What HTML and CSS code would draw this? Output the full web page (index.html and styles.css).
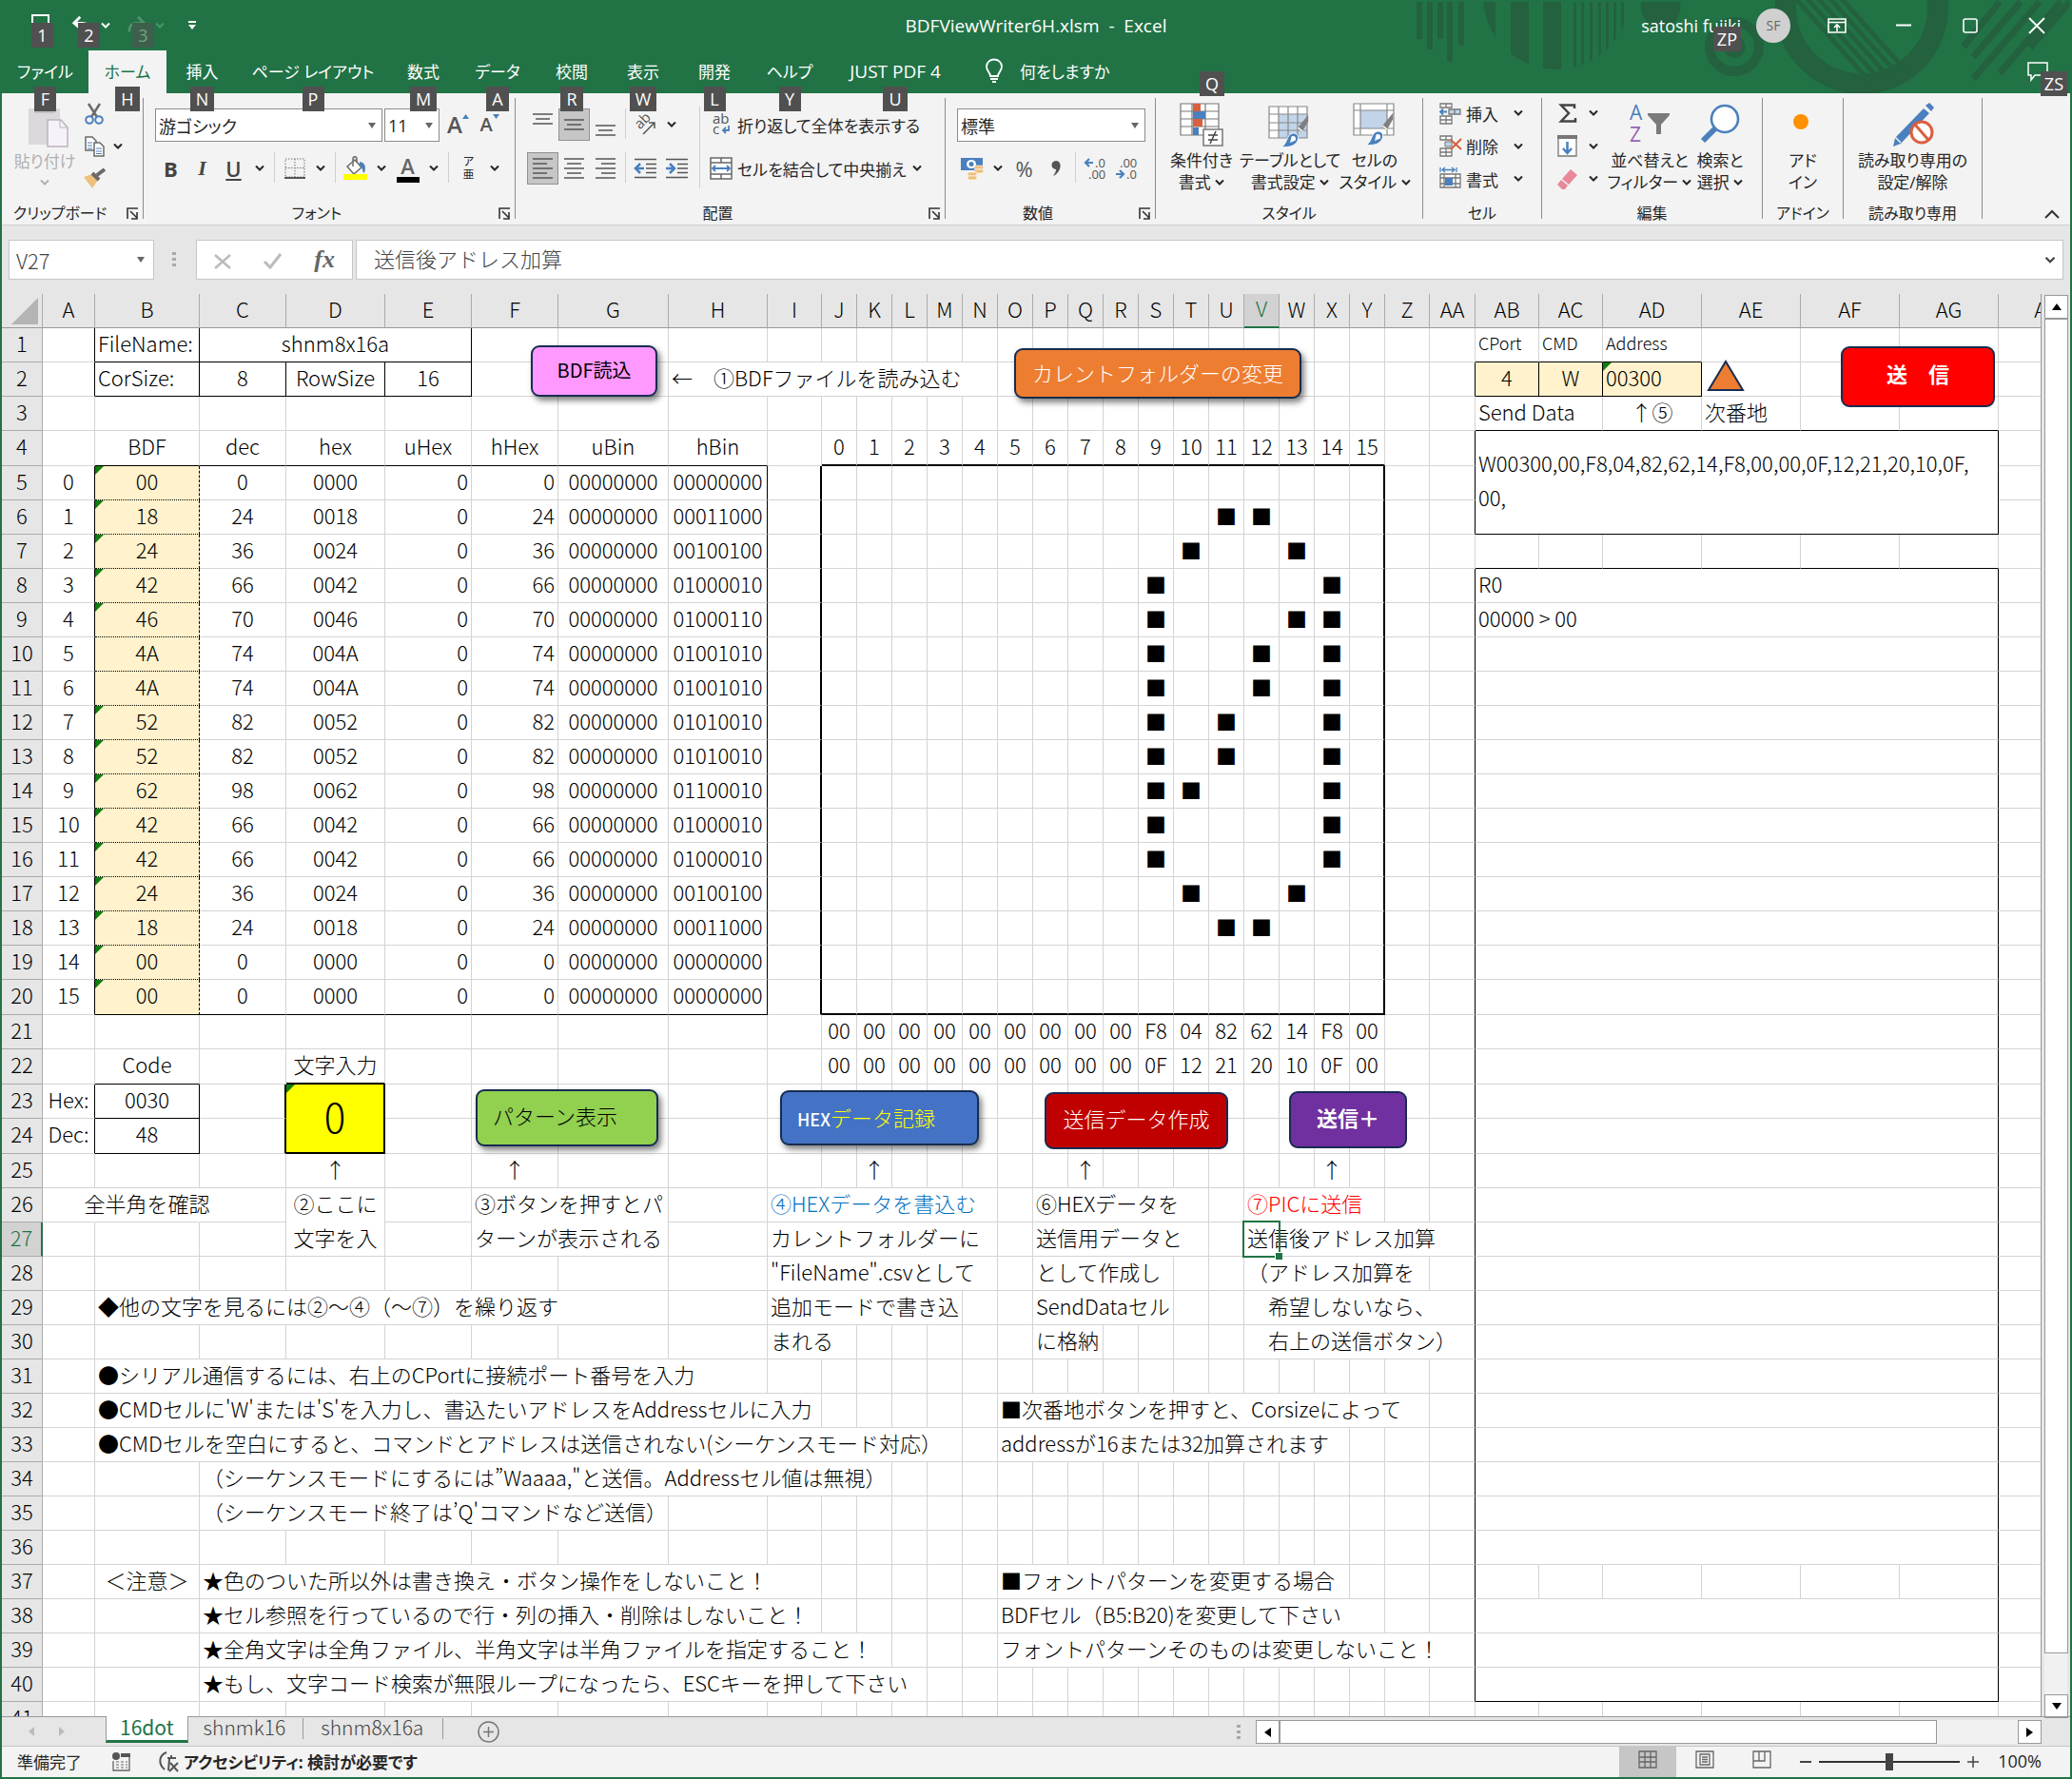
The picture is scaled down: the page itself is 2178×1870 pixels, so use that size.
FILE: index.html
```html
<!DOCTYPE html>
<html lang="ja">
<head>
    <meta charset="UTF-8">
    <title>BDFViewWriter6H.xlsm - Excel</title>
    <link rel="stylesheet" href="styles.css">
</head>
<body>

<!-- shared icon shapes -->
<svg class="defs">
    <symbol id="chev" viewBox="0 0 10 8"><path d="M1 1.5l4 4 4-4" fill="none" stroke="currentColor" stroke-width="2"/></symbol>
    <symbol id="launch" viewBox="0 0 13 13"><path d="M1 12V1h11M4 4l7 7M11 5v7H5" fill="none" stroke="#333" stroke-width="1.6"/></symbol>
    <symbol id="brush" viewBox="0 0 36 42"><path d="M35 1v8l-8 14-6-5z" fill="#7f7f7f"/><path d="M22 17l6 5" stroke="#f3f3f3" stroke-width="2"/><path d="M1 41c8-2 6-16 15-17 7 0 8 7 4 12-4 5-11 6-19 5z" fill="#4a80bd" stroke="#fff"/><path d="M14 28c4-1 6 1 5 5l-7 3z" fill="#fff"/></symbol>
</svg>

<div class="window">

<header class="titlebar">
    <svg class="deco" width="700" height="98" viewBox="1478 0 700 98">
        <defs>
            <clipPath id="bowl"><circle cx="1636" cy="-4" r="77"/></clipPath>
            <clipPath id="cup"><circle cx="1957" cy="6" r="80"/></clipPath>
        </defs>
        <g fill="#24613f">
            <path d="M1489 2h6v39h-6zM1500 2h6v50h-6zM1511 2h6v39h-6zM1521 2h6v63h-6zM1533 2h6v46h-6z"/>
            <path clip-path="url(#bowl)" d="M1558 2h14v96h-14zM1588 2h19v96h-19zM1622 2h19v96h-19zM1654 2h3v96h-3zM1662 2h3v96h-3zM1671 2h3v96h-3zM1680 2h3v96h-3zM1688 2h3v96h-3zM1696 2h3v96h-3zM1704 2h3v96h-3z"/>
            <path d="M1725 2h41c2 12-4 26-20 30-17-4-22-18-21-30z"/>
        </g>
        <g fill="none" stroke="#24613f">
            <circle cx="1823" cy="49" r="26" stroke-width="10"/>
            <circle cx="1823" cy="49" r="7" stroke-width="9"/>
            <circle cx="1957" cy="8" r="80" stroke-width="22"/>
            <path clip-path="url(#cup)" stroke-width="5" d="M1880 -10l100 112M1892 -10l100 112M1904 -10l100 112M1916 -10l100 112M1928 -10l100 112"/>
            <path stroke-width="7" d="M2064 49l38-47M2074 60l50-58M2074 83l70-81M2102 77l64-75M2134 50l42-48"/>
        </g>
    </svg>
    <div class="quick">
        <button class="q save" aria-label="上書き保存"><svg width="20" height="24" viewBox="0 0 20 24"><path d="M1 24V1h17v23" fill="none" stroke="#fff" stroke-width="2"/></svg><span class="keytip">1</span></button>
        <button class="q undo" aria-label="元に戻す"><svg width="22" height="22" viewBox="0 0 24 22"><path d="M9 1L2 8l8 7M3 8h9c6 0 8 4 8 10" fill="none" stroke="#fff" stroke-width="3"/></svg><span class="keytip">2</span><svg width="10" height="8"><use href="#chev"/></svg></button>
        <button class="q redo" aria-label="やり直し"><svg width="22" height="22" viewBox="0 0 24 22"><path d="M13 1l7 7-8 7M20 8h-9c-6 0-8 4-8 10" fill="none" stroke="#4d9467" stroke-width="3"/></svg><span class="keytip faded">3</span><svg width="10" height="8"><use href="#chev"/></svg></button>
        <button class="q" aria-label="カスタマイズ"><svg width="8" height="9" viewBox="0 0 8 9"><path d="M0 1h8" stroke="#fff" stroke-width="2"/><path d="M0 4h8l-4 5z" fill="#fff"/></svg></button>
    </div>
    <div class="title">BDFViewWriter6H.xlsm&nbsp; -&nbsp; Excel</div>
    <div class="account">
        <span class="user">satoshi fujiki<span class="keytip">ZP</span></span>
        <span class="avatar">SF</span>
        <button class="winbtn" aria-label="リボンの表示"><svg width="20" height="16" viewBox="0 0 20 16"><path d="M1 1h18v14H1zM1 4.500h18M10 14V7M7 10l3-3 3 3" fill="none" stroke="#fff" stroke-width="1.600"/></svg></button>
        <button class="winbtn" aria-label="最小化"><svg width="16" height="16" viewBox="0 0 16 16"><path d="M0 7.500h16" stroke="#fff" stroke-width="2"/></svg></button>
        <button class="winbtn" aria-label="最大化"><svg width="16" height="16" viewBox="0 0 16 16"><rect x="1" y="1" width="14" height="14" rx="2" fill="none" stroke="#fff" stroke-width="1.600"/></svg></button>
        <button class="winbtn" aria-label="閉じる"><svg width="16" height="16" viewBox="0 0 16 16"><path d="M0 0l16 16M16 0L0 16" stroke="#fff" stroke-width="1.800"/></svg></button>
    </div>
</header>

<nav class="tabs">
    <a href="#">ファイル<span class="keytip">F</span></a>
    <a href="#" class="active">ホーム<span class="keytip">H</span></a>
    <a href="#">挿入<span class="keytip">N</span></a>
    <a href="#">ページ レイアウト<span class="keytip">P</span></a>
    <a href="#">数式<span class="keytip">M</span></a>
    <a href="#">データ<span class="keytip">A</span></a>
    <a href="#">校閲<span class="keytip">R</span></a>
    <a href="#">表示<span class="keytip">W</span></a>
    <a href="#">開発<span class="keytip">L</span></a>
    <a href="#">ヘルプ<span class="keytip">Y</span></a>
    <a href="#" class="latin">JUST PDF 4<span class="keytip">U</span></a>
    <a href="#" class="tell"><svg width="18" height="25" viewBox="0 0 18 25"><path d="M5 18c0-4-4-5-4-10a8 7.500 0 0 1 16 0c0 5-4 6-4 10zM5 21h8M7 24h4" fill="none" stroke="#fff" stroke-width="1.800"/></svg>何をしますか<span class="keytip">Q</span></a>
    <a href="#" class="comment" aria-label="コメント"><svg width="22" height="20" viewBox="0 0 22 20"><path d="M1 1h20v13H8l-4 5v-5H1z" fill="none" stroke="#fff" stroke-width="1.500"/></svg><span class="keytip">ZS</span></a>
</nav>

<section class="ribbon">
    <div class="group clipboard">
        <div class="body">
            <button class="big off">
                <svg width="42" height="42" viewBox="0 0 42 42"><path d="M0 1h33v38H0z" fill="#dcd8dc"/><path d="M6 0h22v6H6z" fill="#c4c0c4"/><path d="M20 13h14l7 8v20H20z" fill="#f6f2f8" stroke="#bbb5bd" stroke-width="1.500"/><path d="M33 13v8h8" fill="none" stroke="#bbb5bd"/></svg>
                <span>貼り付け</span><svg width="10" height="8"><use href="#chev"/></svg>
            </button>
            <div class="stack">
                <button class="ib" aria-label="切り取り"><svg width="20" height="23" viewBox="0 0 20 23"><path d="M4 1l9 14M16 1L7 15" stroke="#6a6a6a" stroke-width="2.500"/><g fill="none" stroke="#4a80bd" stroke-width="2"><circle cx="5" cy="18" r="3.800"/><circle cx="15" cy="18" r="3.800"/></g></svg></button>
                <span class="pair"><button class="ib" aria-label="コピー"><svg width="21" height="22" viewBox="0 0 21 22"><g fill="#fff" stroke="#6a6a6a" stroke-width="1.500"><path d="M1 1h7l4 4v10H1z"/><path d="M10 7h6l4 4v10H10z"/></g><path d="M3 7h5M3 10h5M3 13h5M12 13h6M12 16h6M12 18.500h6" stroke="#4a80bd"/></svg></button><button class="dd"><svg width="10" height="8"><use href="#chev"/></svg></button></span>
                <button class="ib" aria-label="書式のコピー"><svg width="23" height="21" viewBox="0 0 23 21"><path d="M0 9l9-3 6 6-6 9z" fill="#eec07c"/><path d="M9 5l7 7M14 7l8-6" stroke="#6a6a6a" stroke-width="4"/></svg></button>
            </div>
        </div>
        <div class="caption opens">クリップボード<svg class="launch"><use href="#launch"/></svg></div>
    </div>

    <div class="group font">
        <div class="body rows">
            <div class="line">
                <label class="combo wide"><input type="text" value="游ゴシック" aria-label="フォント"><i></i></label>
                <label class="combo small"><input type="text" value="11" aria-label="フォント サイズ"><i></i></label>
                <button class="ib glyph"><b class="up">A</b><svg width="7" height="5"><path d="M0 5l3.500-5L7 5z" fill="#4a80bd"/></svg></button>
                <button class="ib glyph"><b class="down">A</b><svg width="7" height="5"><path d="M0 0h7L3.500 5z" fill="#4a80bd"/></svg></button>
            </div>
            <div class="line">
                <button class="ib fmt"><b>B</b></button>
                <button class="ib fmt"><i>I</i></button>
                <button class="ib fmt"><u>U</u></button>
                <button class="dd"><svg width="10" height="8"><use href="#chev"/></svg></button>
                <hr>
                <button class="ib" aria-label="罫線"><svg width="22" height="22" viewBox="0 0 22 22"><path d="M1 1h20v19H1zM11 1v19M1 10.500h20" fill="none" stroke="#777" stroke-dasharray="1.500 1.500"/><path d="M0 21h22" stroke="#555" stroke-width="2"/></svg></button>
                <button class="dd"><svg width="10" height="8"><use href="#chev"/></svg></button>
                <hr>
                <button class="ib" aria-label="塗りつぶし"><svg width="25" height="26" viewBox="0 0 25 26"><path d="M4 11l8-7 7 8-8 7z" fill="#fff" stroke="#6a6a6a" stroke-width="1.500"/><path d="M10 11V3c0-3 4-3 4 0v4" fill="none" stroke="#6a6a6a" stroke-width="1.500"/><path d="M17 6c6 1 7 5 5 12-3-2-1-6-5-9z" fill="#4a80bd"/><path d="M0 19h25v6H0z" fill="#ff0"/></svg></button>
                <button class="dd"><svg width="10" height="8"><use href="#chev"/></svg></button>
                <button class="ib colour" aria-label="フォントの色"><b>A</b></button>
                <button class="dd"><svg width="10" height="8"><use href="#chev"/></svg></button>
                <hr>
                <button class="ib ruby"><span>ア</span><span class="kanji">亜</span></button>
                <button class="dd"><svg width="10" height="8"><use href="#chev"/></svg></button>
            </div>
        </div>
        <div class="caption opens">フォント<svg class="launch"><use href="#launch"/></svg></div>
    </div>

    <div class="group align">
        <div class="body">
            <div class="rows">
                <div class="line">
                    <button class="ib" aria-label="上揃え"><svg width="21" height="24" viewBox="0 0 21 24"><path d="M0 1h21M3 6h15M0 11h21" stroke="#555" stroke-width="1.500"/></svg></button>
                    <button class="ib on" aria-label="上下中央揃え"><svg width="21" height="24" viewBox="0 0 21 24"><path d="M0 7h21M3 12h15M0 17h21" stroke="#555" stroke-width="1.500"/></svg></button>
                    <button class="ib" aria-label="下揃え"><svg width="21" height="24" viewBox="0 0 21 24"><path d="M0 13h21M3 18h15M0 23h21" stroke="#555" stroke-width="1.500"/></svg></button>
                    <hr>
                    <button class="ib" aria-label="方向"><svg width="26" height="24" viewBox="0 0 26 24"><text x="4" y="17" transform="rotate(-45 6 14)" font-size="15" fill="#555">ab</text><path d="M10 22L22 10M16 10h6v6" fill="none" stroke="#555" stroke-width="1.500"/></svg></button>
                    <button class="dd"><svg width="10" height="8"><use href="#chev"/></svg></button>
                </div>
                <div class="line">
                    <button class="ib on" aria-label="左揃え"><svg width="21" height="24" viewBox="0 0 21 24"><path d="M0 2h21M0 7h15M0 12h21M0 17h15M0 22h21" stroke="#555" stroke-width="1.500"/></svg></button>
                    <button class="ib" aria-label="中央揃え"><svg width="21" height="24" viewBox="0 0 21 24"><path d="M0 2h21M3 7h15M0 12h21M3 17h15M0 22h21" stroke="#555" stroke-width="1.500"/></svg></button>
                    <button class="ib" aria-label="右揃え"><svg width="21" height="24" viewBox="0 0 21 24"><path d="M0 2h21M6 7h15M0 12h21M6 17h15M0 22h21" stroke="#555" stroke-width="1.500"/></svg></button>
                    <hr>
                    <button class="ib" aria-label="インデントを減らす"><svg width="23" height="22" viewBox="0 0 23 22"><path d="M0 1.500h23M12 6.500h11M12 11h11M12 15.500h11M0 20.500h23" stroke="#555" stroke-width="1.500"/><path d="M10 11H2M6 6l-5 5 5 5" fill="none" stroke="#4a80bd" stroke-width="2.500"/></svg></button>
                    <button class="ib" aria-label="インデントを増やす"><svg width="23" height="22" viewBox="0 0 23 22"><path d="M0 1.500h23M12 6.500h11M12 11h11M12 15.500h11M0 20.500h23" stroke="#555" stroke-width="1.500"/><path d="M0 11h8M4 6l5 5-5 5" fill="none" stroke="#4a80bd" stroke-width="2.500"/></svg></button>
                </div>
            </div>
            <hr class="tall">
            <div class="rows">
                <div class="line"><button class="txt"><svg width="24" height="26" viewBox="0 0 24 26"><text x="3" y="12" font-size="15" fill="#555">ab</text><text x="3" y="23" font-size="15" fill="#555">c</text><path d="M20 14v5h-6M17 16l-3 3 3 3" fill="none" stroke="#4a80bd" stroke-width="1.800"/></svg>折り返して全体を表示する</button></div>
                <div class="line"><button class="txt"><svg width="24" height="24" viewBox="0 0 24 24"><path d="M1 1h22v22H1zM1 6h22M1 18h22M12 1v5M12 18v5" fill="#fff" stroke="#666" stroke-width="1.500"/><path d="M3 12h18M6 9l-3 3 3 3M18 9l3 3-3 3" fill="none" stroke="#4a80bd" stroke-width="1.800"/></svg>セルを結合して中央揃え</button><button class="dd"><svg width="10" height="8"><use href="#chev"/></svg></button></div>
            </div>
        </div>
        <div class="caption opens">配置<svg class="launch"><use href="#launch"/></svg></div>
    </div>

    <div class="group number">
        <div class="body rows">
            <div class="line"><label class="combo format"><input type="text" value="標準" aria-label="表示形式"><i></i></label></div>
            <div class="line">
                <button class="ib" aria-label="通貨"><svg width="24" height="24" viewBox="0 0 24 24"><path d="M0 1h23v13H0z" fill="#4a80bd"/><ellipse cx="11" cy="7.500" rx="5" ry="4.500" fill="#fff"/><circle cx="11" cy="7.500" r="2.500" fill="#4a80bd"/><g fill="#eec07c" stroke="#fff" stroke-width=".6"><rect x="14" y="9" width="10" height="4" rx="2"/><rect x="14" y="13" width="10" height="4" rx="2"/><rect x="7" y="16" width="10" height="4" rx="2"/><rect x="7" y="20" width="10" height="4" rx="2"/></g></svg></button>
                <button class="dd"><svg width="10" height="8"><use href="#chev"/></svg></button>
                <button class="ib percent">%</button>
                <button class="ib" aria-label="桁区切り"><svg width="10" height="16" viewBox="0 0 10 16"><path d="M5 0c7 0 6 12-3 16 3-4 3-6 3-7-6 0-6-9 0-9z" fill="#555"/></svg></button>
                <hr>
                <button class="ib" aria-label="小数点以下を増やす"><svg width="26" height="26" viewBox="0 0 26 26"><path d="M10 7H2M6 3L2 7l4 4" fill="none" stroke="#4a80bd" stroke-width="2.200"/><text x="12" y="12" font-size="13" fill="#555">.0</text><text x="5" y="24" font-size="13" fill="#555">.00</text></svg></button>
                <button class="ib" aria-label="小数点以下を減らす"><svg width="26" height="26" viewBox="0 0 26 26"><path d="M1 19h8M5 15l4 4-4 4" fill="none" stroke="#4a80bd" stroke-width="2.200"/><text x="5" y="12" font-size="13" fill="#555">.00</text><text x="12" y="24" font-size="13" fill="#555">.0</text></svg></button>
            </div>
        </div>
        <div class="caption opens">数値<svg class="launch"><use href="#launch"/></svg></div>
    </div>

    <div class="group style">
        <div class="body">
            <button class="big">
                <svg width="46" height="46" viewBox="0 0 46 46"><path d="M1 1h40v33H1zM13 1v33M27 1v33M1 9h40M1 17h40M1 25h40" fill="#fff" stroke="#777" stroke-width="1.200"/><path d="M14 1h8v8h-8zM14 17h10v8H14z" fill="#d95f3f"/><path d="M14 9h13v8H14zM14 26h6v8h-6z" fill="#4a80bd"/><path d="M25 28h20v17H25z" fill="#fff" stroke="#777" stroke-width="1.500"/><path d="M30 34h10M30 39h10M38 30l-6 13" stroke="#444" stroke-width="1.500"/></svg>
                <span>条件付き</span><span>書式 <svg width="10" height="8"><use href="#chev"/></svg></span>
            </button>
            <button class="big">
                <svg width="46" height="46" viewBox="0 0 46 46"><path d="M1 4h40v33H1z" fill="#fff"/><path d="M11 12h30v25H11z" fill="#c1d4ea"/><path d="M1 4h40v33H1zM11 4v33M21 4v33M31 4v33M1 12h40M1 21h40M1 29h40" fill="none" stroke="#888" stroke-width="1.200"/><use href="#brush" x="11" y="12" width="34" height="35"/></svg>
                <span>テーブルとして</span><span>書式設定 <svg width="10" height="8"><use href="#chev"/></svg></span>
            </button>
            <button class="big">
                <svg width="46" height="46" viewBox="0 0 46 46"><path d="M1 1h42v33H1z" fill="#fff"/><path d="M8 8h28v19H8z" fill="#c1d4ea"/><path d="M1 1h42v33H1zM8 1v33M36 1v33M1 8h42M1 27h42" fill="none" stroke="#888" stroke-width="1.200"/><use href="#brush" x="11" y="10" width="34" height="35"/></svg>
                <span>セルの</span><span>スタイル <svg width="10" height="8"><use href="#chev"/></svg></span>
            </button>
        </div>
        <div class="caption">スタイル</div>
    </div>

    <div class="group cells">
        <div class="body rows3">
            <button class="txt"><svg width="23" height="23" viewBox="0 0 23 23"><path d="M1 1h12v4H1zM7 1v4M1 14h12v8H1zM7 14v8M1 18h12" fill="#fff" stroke="#777" stroke-width="1.300"/><path d="M10 7h12v5H10zM16 7v5" fill="#c1d4ea" stroke="#777" stroke-width="1.300"/><path d="M8 9.500H1M4 6.500l-3 3 3 3" fill="none" stroke="#4a80bd" stroke-width="1.800"/></svg>挿入<svg class="c" width="10" height="8"><use href="#chev"/></svg></button>
            <button class="txt"><svg width="23" height="23" viewBox="0 0 23 23"><path d="M1 1h12v4H1zM7 1v4M1 14h12v8H1zM7 14v8M1 18h12" fill="#fff" stroke="#777" stroke-width="1.300"/><path d="M6 7h7v5H6z" fill="#c1d4ea" stroke="#777"/><path d="M12 5l11 10M23 4L12 15" stroke="#d95f3f" stroke-width="2.200"/></svg>削除<svg class="c" width="10" height="8"><use href="#chev"/></svg></button>
            <button class="txt"><svg width="23" height="25" viewBox="0 0 23 25"><path d="M1 7h21v14H1zM5 7v14M17 7v14M1 11h21M1 17h21" fill="#fff" stroke="#777" stroke-width="1.300"/><path d="M6 11h8v8H6z" fill="#4a80bd"/><path d="M1 0v5M18 0v5M3 2.500h13M6 0L3 2.500 6 5M13 0l3 2.500L13 5" fill="none" stroke="#4a80bd" stroke-width="1.300"/></svg>書式<svg class="c" width="10" height="8"><use href="#chev"/></svg></button>
        </div>
        <div class="caption">セル</div>
    </div>

    <div class="group edit">
        <div class="body">
            <div class="rows3">
                <span class="pair"><button class="ib" aria-label="合計"><svg width="18" height="20" viewBox="0 0 18 20"><path d="M16 5V1.500H2L10 10l-8 8.500h15V15" fill="none" stroke="#444" stroke-width="2.500"/></svg></button><button class="dd"><svg width="10" height="8"><use href="#chev"/></svg></button></span>
                <span class="pair"><button class="ib" aria-label="フィル"><svg width="21" height="23" viewBox="0 0 21 23"><path d="M1 1h19v21H1z" fill="#fff" stroke="#777" stroke-width="1.300"/><path d="M0 0h21v4H0z" fill="#777"/><path d="M10.500 7v12M6 14l4.500 5 4.500-5" fill="none" stroke="#4a80bd" stroke-width="2.500"/></svg></button><button class="dd"><svg width="10" height="8"><use href="#chev"/></svg></button></span>
                <span class="pair"><button class="ib" aria-label="クリア"><svg width="21" height="21" viewBox="0 0 21 21"><path d="M5 10L14 0l7 6-9 10z" fill="#e8889a"/><path d="M4 11l7 6-3 4-3 0-5-5z" fill="#e8889a"/></svg></button><button class="dd"><svg width="10" height="8"><use href="#chev"/></svg></button></span>
            </div>
            <button class="big">
                <svg width="42" height="46" viewBox="0 0 42 46"><text x="0" y="18" font-size="21" fill="#4a80bd">A</text><text x="0" y="41" font-size="21" fill="#9a62b8">Z</text><path d="M19 11h23v2l-9 10v10h-5V23l-9-10z" fill="#7a7a7a"/></svg>
                <span>並べ替えと</span><span>フィルター <svg width="10" height="8"><use href="#chev"/></svg></span>
            </button>
            <button class="big">
                <svg width="42" height="46" viewBox="0 0 42 46"><circle cx="26" cy="17" r="14" fill="#fff" stroke="#4a80bd" stroke-width="2.600"/><path d="M16 27L3 40" stroke="#4a80bd" stroke-width="6"/></svg>
                <span>検索と</span><span>選択 <svg width="10" height="8"><use href="#chev"/></svg></span>
            </button>
        </div>
        <div class="caption">編集</div>
    </div>

    <div class="group addin">
        <div class="body">
            <button class="big"><svg width="42" height="46" viewBox="0 0 42 46"><circle cx="19" cy="20" r="8" fill="#ff9000"/></svg><span>アド</span><span>イン</span></button>
        </div>
        <div class="caption">アドイン</div>
    </div>

    <div class="group readonly">
        <div class="body">
            <button class="big"><svg width="48" height="46" viewBox="0 0 48 46"><path d="M35 6l6 5-30 32-8 3 2-9z" fill="#4a80bd"/><path d="M37 3l4-3 5 5-3 4z" fill="#4a80bd"/><path d="M5 36l6 6" stroke="#f3f3f3" stroke-width="1.500"/><circle cx="33" cy="31" r="11" fill="#fff" stroke="#d95f3f" stroke-width="3"/><path d="M26 23l14 16" stroke="#d95f3f" stroke-width="3"/></svg><span>読み取り専用の</span><span>設定/解除</span></button>
        </div>
        <div class="caption">読み取り専用</div>
    </div>
    <button class="collapse" aria-label="リボンを折りたたむ"><svg width="16" height="10" viewBox="0 0 16 10"><path d="M1 9l7-7 7 7" fill="none" stroke="#333" stroke-width="2"/></svg></button>
</section>

<section class="formulabar">
    <label class="namebox"><input type="text" value="V27" aria-label="名前ボックス"><i></i></label>
    <span class="dots"></span>
    <div class="fx">
        <button aria-label="キャンセル"><svg width="18" height="16" viewBox="0 0 18 16"><path d="M1 1l16 14M17 1L1 15" stroke="#bbb" stroke-width="2.500"/></svg></button>
        <button aria-label="入力"><svg width="19" height="17" viewBox="0 0 19 17"><path d="M1 9l6 6L18 1" fill="none" stroke="#bbb" stroke-width="3"/></svg></button>
        <button class="fn"><i>fx</i></button>
    </div>
    <div class="formula"><input type="text" value="送信後アドレス加算" aria-label="数式バー"><svg width="12" height="9"><use href="#chev"/></svg></div>
</section>

<main class="work">
    <div class="sheet">
        <table id="grid"></table>
        <button class="shape s-bdf shadow">BDF読込</button>
        <button class="shape s-folder shadow">カレントフォルダーの変更</button>
        <button class="shape s-send">送　信</button>
        <button class="tri" aria-label="次番地"><svg width="42" height="36" viewBox="0 0 42 36"><path d="M21 3l18 30H3z" fill="#ed7d31" stroke="#172c51" stroke-width="2"/></svg></button>
        <button class="shape s-pattern shadow">パターン表示</button>
        <button class="shape s-hex shadow"><span>HEX</span>データ記録</button>
        <button class="shape s-make">送信データ作成</button>
        <button class="shape s-plus">送信＋</button>
        <div class="cursor"></div>
    </div>
    <div class="vscroll">
        <button class="arrow" aria-label="上へ"><svg width="10" height="7"><path d="M0 7l5-7 5 7z"/></svg></button>
        <div class="vtrack"><div class="vthumb"></div></div>
        <button class="arrow" aria-label="下へ"><svg width="10" height="7"><path d="M0 0h10L5 7z"/></svg></button>
    </div>
</main>

<div class="sheetbar">
    <div class="navs"><svg width="6" height="10"><path d="M6 0v10L0 5z"/></svg><svg width="6" height="10"><path d="M0 0v10l6-5z"/></svg></div>
    <a href="#" class="current">16dot</a>
    <a href="#">shnmk16</a>
    <a href="#">shnm8x16a</a>
    <button class="plus" aria-label="新しいシート"><svg width="23" height="23" viewBox="0 0 23 23"><circle cx="11.500" cy="11.500" r="10.500" fill="none" stroke="#777" stroke-width="1.500"/><path d="M11.500 6v11M6 11.500h11" stroke="#777" stroke-width="1.500"/></svg></button>
    <span class="dots"></span>
    <div class="hscroll">
        <button class="arrow" aria-label="左へ"><svg width="7" height="10"><path d="M7 0v10L0 5z"/></svg></button>
        <div class="htrack"><div class="hthumb"></div></div>
        <button class="arrow" aria-label="右へ"><svg width="7" height="10"><path d="M0 0v10l7-5z"/></svg></button>
    </div>
</div>

<footer class="status">
    <span>準備完了</span>
    <svg class="rec" width="20" height="20" viewBox="0 0 20 20"><circle cx="5" cy="4" r="4" fill="#555"/><path d="M10 1h10v4H10z" fill="#555"/><path d="M2 9v10h17V5" fill="none" stroke="#666" stroke-width="1.300"/><path d="M5 10h3M10 10h3M15 10h2M5 13h3M10 13h3M15 13h2M5 16h3M10 16h3M15 16h2" stroke="#666"/></svg>
    <svg class="acc" width="22" height="22" viewBox="0 0 22 22"><path d="M8 1C0 4-1 13 6 19M9 7h9M13 4v4M11 8l-1 12M12 12l8 9M20 12l-9 9" fill="none" stroke="#555" stroke-width="2"/></svg>
    <b>アクセシビリティ: 検討が必要です</b>
    <div class="views">
        <button class="on" aria-label="標準"><svg width="20" height="19" viewBox="0 0 20 19"><path d="M1 1h18v17H1zM7 1v17M13 1v17M1 7h18M1 12h18" fill="none" stroke="#666" stroke-width="1.300"/></svg></button>
        <button aria-label="ページ レイアウト"><svg width="20" height="19" viewBox="0 0 20 19"><path d="M1 1h18v17H1zM5 4h10v11H5zM7 7h6M7 9.500h6M7 12h6" fill="none" stroke="#666" stroke-width="1.300"/></svg></button>
        <button aria-label="改ページ"><svg width="20" height="19" viewBox="0 0 20 19"><path d="M1 1h18v17H1zM1 11h12V1M7 1v10" fill="none" stroke="#666" stroke-width="1.300"/></svg></button>
    </div>
    <svg width="12" height="12"><path d="M0 6h12" stroke="#444" stroke-width="2"/></svg>
    <input type="range" min="0" max="100" value="50" aria-label="ズーム">
    <svg width="12" height="12"><path d="M0 6h12M6 0v12" stroke="#444" stroke-width="1.500"/></svg>
    <span class="zoom">100%</span>
</footer>

</div>

<script src="script.js"></script>
</body>
</html>
```

FILE: styles.css
```css
* {
    box-sizing: border-box;
}
body {
    margin: 0;
    font-family: "Open Sans", "Noto Sans CJK JP", sans-serif;
    font-size: 17px;
    color: #262626;
}
button {
    font: inherit;
    color: inherit;
    background: none;
    border: 0;
    padding: 0;
    margin: 0;
}
input {
    font: inherit;
    color: inherit;
    border: 0;
    padding: 0;
    background: none;
    min-width: 0;
}
a {
    color: inherit;
    text-decoration: none;
}
svg {
    flex: none;
    overflow: visible;
}
.defs {
    position: absolute;
    width: 0;
    height: 0;
    overflow: hidden;
}
.window {
    height: 100vh;
    display: flex;
    flex-direction: column;
    border: solid #217346;
    border-width: 0 2px 2px;
    background: #e6e6e6;
    overflow: hidden;
    font-feature-settings: "palt";
}

/* title bar */
.titlebar {
    height: 53px;
    flex: none;
    background: #217346;
    color: #fff;
    position: relative;
    display: grid;
    grid-template-columns: 1fr auto 1fr;
    align-items: center;
}
.deco {
    position: absolute;
    right: -2px;
    top: 0;
    z-index: 3;
    overflow: hidden;
    pointer-events: none;
}
.keytip {
    position: absolute;
    min-width: 23px;
    height: 26px;
    padding: 0 6px;
    background: #505050;
    color: #fff;
    font-size: 18px;
    line-height: 26px;
    text-align: center;
    z-index: 3;
}
.quick {
    display: flex;
    padding-left: 31px;
}
.q {
    position: relative;
    display: flex;
    align-items: center;
    gap: 8px;
    height: 24px;
    margin-right: 17px;
}
.save {
    margin-right: 23px;
}
.q .keytip {
    left: 6px;
    top: 9px;
}
.save .keytip {
    left: 0;
}
.redo {
    color: #4d9467;
    margin-right: 25px;
}
.keytip.faded {
    background: #3d5f4b;
    color: #6fa384;
}
.title {
    font-size: 19px;
}
.account {
    display: flex;
    align-items: center;
    justify-content: flex-end;
    position: relative;
    z-index: 4;
}
.user {
    position: relative;
    font-size: 18px;
    margin-right: 16px;
}
.user .keytip {
    right: 0;
    top: 13px;
    padding: 0 4px;
}
.avatar {
    width: 36px;
    height: 36px;
    border-radius: 50%;
    background: #d0d0d0;
    color: #666;
    font-size: 14px;
    line-height: 36px;
    text-align: center;
    margin-right: 14px;
}
.winbtn {
    width: 70px;
    height: 24px;
    display: flex;
    align-items: center;
    justify-content: center;
}

/* ribbon tabs */
.tabs {
    height: 45px;
    flex: none;
    background: #217346;
    color: #fff;
    display: grid;
    grid-template-columns: 91px 82px 75px 158px 74px 82px 74px 76px 74px 84px 138px 1fr 60px;
    position: relative;
    z-index: 2;
}
.tabs > a {
    position: relative;
    display: flex;
    align-items: center;
    justify-content: center;
    padding-bottom: 2px;
}
.tabs > .comment {
    z-index: 4;
}
.tabs .latin {
    font-size: 19px;
}
.tabs .keytip {
    top: 38px;
}
.tabs .active {
    background: #f3f3f3;
    color: #217346;
}
.tabs .tell {
    justify-content: flex-start;
    padding-left: 26px;
    gap: 18px;
}
.tell .keytip {
    left: 251px;
}
.tabs .tell .keytip, .tabs .comment .keytip {
    top: 22px;
}
.comment svg {
    margin-right: 8px;
}
.comment .keytip {
    right: 3px;
    padding: 0 4px;
}

/* ribbon */
.ribbon {
    height: 139px;
    flex: none;
    display: flex;
    position: relative;
    background: #f3f3f3;
    border-bottom: 1px solid #d0d0d0;
    padding-top: 5px;
}
.group {
    height: 127px;
    flex: none;
    border-right: 1px solid #8c8c8c;
    display: flex;
    flex-direction: column;
}
.clipboard { width: 149px; }
.font { width: 391px; }
.align { width: 452px; }
.number { width: 221px; }
.style { width: 281px; }
.cells { width: 125px; }
.edit { width: 232px; }
.addin { width: 85px; }
.readonly { width: 146px; }
.body {
    height: 105px;
    display: flex;
}
.caption {
    position: relative;
    line-height: 32px;
    height: 22px;
    font-size: 16px;
    text-align: center;
}
.opens {
    padding-right: 26px;
}
.launch {
    position: absolute;
    right: 4px;
    bottom: -1px;
    width: 13px;
    height: 13px;
}
.big {
    display: flex;
    flex-direction: column;
    align-items: center;
    line-height: 23px;
    padding-top: 5px;
    white-space: nowrap;
}
.big span svg {
    vertical-align: 2px;
}
.big > svg:first-child {
    margin-bottom: 3px;
}
.off {
    color: #b0b0b0;
    width: 80px;
    padding-top: 10px;
    margin-left: 5px;
}
.off > svg:first-child {
    margin: 0 0 3px 8px;
}
.off > svg:last-child {
    margin-top: 7px;
}
.stack {
    display: flex;
    flex-direction: column;
    align-items: flex-start;
    justify-content: space-between;
    padding: 0 0 4px;
}
.pair {
    display: flex;
}
.ib {
    width: 33px;
    height: 34px;
    display: flex;
    align-items: center;
    justify-content: center;
}
.stack .ib {
    width: 28px;
    margin-left: -2px;
}
.on {
    background: #c6c6c6;
    border: 1px solid #919191;
}
.dd {
    width: 22px;
    display: flex;
    align-items: center;
    justify-content: center;
}
.rows {
    display: flex;
    flex-direction: column;
    gap: 12px;
    padding-top: 11px;
}
.line {
    display: flex;
    height: 34px;
}
.line hr {
    width: 1px;
    height: 32px;
    border: 0;
    margin: 0 4px;
    background: #cfcfcf;
}
hr.tall {
    width: 1px;
    height: 86px;
    border: 0;
    margin: 9px 10px 0 7px;
    background: #cfcfcf;
}
.font .body {
    padding-left: 12px;
}
.combo {
    display: flex;
    align-items: center;
    height: 35px;
    background: #fff;
    border: 1px solid #8c8c8c;
    padding: 0 6px 0 3px;
    font-size: 18px;
}
.combo input, .namebox input, .formula input {
    flex: 1;
    font-feature-settings: "palt";
}
.combo i, .namebox i {
    border: 4px solid transparent;
    border-top: 6px solid #666;
    border-bottom: 0;
}
.wide {
    width: 239px;
    margin-right: 2px;
}
.small {
    width: 58px;
    margin-right: 3px;
}
.format {
    width: 198px;
}
.glyph {
    color: #555;
    align-items: flex-start;
}
.glyph b {
    font-weight: 600;
    line-height: 34px;
}
.glyph .up {
    font-size: 24px;
}
.glyph .down {
    font-size: 20px;
}
.glyph svg {
    margin-top: 6px;
}
.fmt {
    font-size: 22px;
    color: #444;
}
.fmt i {
    font-family: "Liberation Serif", serif;
    font-weight: bold;
}
.fmt u {
    font-weight: 600;
}
.colour b {
    width: 24px;
    height: 30px;
    line-height: 24px;
    font-size: 22px;
    font-weight: 600;
    color: #666;
    border-bottom: 6px solid #000;
}
.ruby {
    flex-direction: column;
    font-size: 12px;
    line-height: 14px;
}
.align .body {
    padding-left: 12px;
}
.txt {
    display: flex;
    align-items: center;
    gap: 5px;
    white-space: nowrap;
}
.number .body {
    padding-left: 12px;
}
.number .line + .line {
    margin-left: -1px;
}
.percent {
    font-size: 22px;
    color: #555;
}
.style .body {
    display: grid;
    grid-template-columns: 96px 90px 88px;
}
.rows3 {
    display: flex;
    flex-direction: column;
    justify-content: space-between;
    padding: 0 0 4px;
}
.rows3 .txt {
    height: 32px;
    margin-left: 17px;
}
.rows3 .c {
    margin-left: 11px;
}
.rows3 .pair {
    height: 32px;
    margin-left: 10px;
}
.rows3 .ib {
    height: 32px;
}
.edit .big {
    width: 84px;
    margin-left: 6px;
}
.edit .big + .big {
    width: 64px;
    margin-left: 0;
}
.addin .big, .readonly .big {
    width: 100%;
}
.collapse {
    position: absolute;
    right: 11px;
    bottom: 1px;
}

/* formula bar */
.formulabar {
    height: 72px;
    flex: none;
    display: flex;
    align-items: center;
    padding: 0 7px;
    color: #444;
    font-size: 22px;
    font-family: "Noto Sans CJK JP", sans-serif;
    font-weight: 300;
}
.namebox, .fx, .formula {
    height: 42px;
    background: #fff;
    border: 1px solid #c6c6c6;
    display: flex;
    align-items: center;
}
.namebox {
    width: 153px;
    padding: 0 9px 0 7px;
}
.dots {
    width: 4px;
    height: 16px;
    background: repeating-linear-gradient(#a8a8a8 0 3px, transparent 3px 6px);
}
.formulabar .dots {
    margin: 0 21px 0 19px;
}
.fx {
    width: 165px;
    justify-content: space-between;
    padding: 0 18px;
    margin-right: 3px;
}
.fn {
    font: bold 26px "Liberation Serif", serif;
    color: #666;
}
.formula {
    flex: 1;
    padding: 0 7px 0 18px;
}
.formula input {
    font-feature-settings: normal;
    padding-bottom: 5px;
}

/* sheet */
.work {
    flex: 1;
    min-height: 0;
    display: flex;
}
.sheet {
    flex: 1;
    min-width: 0;
    position: relative;
    overflow: hidden;
    background: #fff;
    border-right: 1px solid #999;
    font-family: "Noto Sans CJK JP", sans-serif;
    font-feature-settings: normal;
    font-size: 22px;
    font-weight: 300;
    color: #000;
}
table {
    table-layout: fixed;
    width: 0;
    border-collapse: separate;
    border-spacing: 0;
}
th, td {
    height: 36px;
    padding: 0 0 6px;
    line-height: 28px;
    border: solid #d4d4d4;
    border-width: 0 1px 1px 0;
    white-space: nowrap;
    overflow: hidden;
    position: relative;
}
th {
    background: #e6e6e6;
    border-color: #ababab;
    font-weight: 300;
    text-align: center;
}
thead th {
    border-bottom-color: #999;
}
th.sel {
    background: #d2d2d2;
    color: #217346;
}
thead th.sel {
    border-bottom: 2px solid #217346;
}
tbody th.sel {
    border-right: 2px solid #217346;
}
.corner::after {
    content: "";
    position: absolute;
    right: 4px;
    bottom: 3px;
    border: solid transparent;
    border-width: 0 0 28px 28px;
    border-bottom-color: #b4b4b4;
}
td {
    padding: 0 3px 6px;
}
tr.tall td, tr.tall th {
    height: 37px;
}
.c { text-align: center; }
td.c { padding: 0 0 6px; }
.r { text-align: right; }
.small-text { font-size: 18px; }
.kr { border-right-color: #000; }
.kb { border-bottom-color: #000; }
.mr { border-right: 2px solid #000; }
.mb { border-bottom: 2px solid #000; }
.dot { border-bottom: 1px dotted #000; }
.dash { border-right: 1px dashed #000; }
.nr { border-right-color: transparent; }
.input { background: #fff2cc; }
.yellow {
    background: #ff0;
    font-size: 42px;
}
.flag::before {
    content: "";
    position: absolute;
    left: 0;
    top: 0;
    border: solid transparent;
    border-width: 9px 9px 0 0;
    border-top-color: #107c10;
}
.wrap {
    line-height: 36px;
}
.wrap span {
    display: block;
    margin-top: -6px;
}
td.two {
    padding-bottom: 0;
}
.blue { color: #0070c0; }
.red { color: #f00; }
.spill {
    overflow: visible;
}
.spill span {
    display: block;
    margin: 0 -30px;
}

/* shapes lying over the cells */
.shape {
    position: absolute;
    border: 2px solid #172c51;
    border-radius: 9px;
    padding-bottom: 3px;
    font-size: 22px;
    white-space: nowrap;
}
.shadow {
    box-shadow: 3px 4px 6px #00000080;
}
.s-bdf {
    left: 556px;
    top: 54px;
    width: 133px;
    height: 54px;
    background: #ff99ff;
    font-size: 20px;
    font-weight: 400;
}
.s-folder {
    left: 1064px;
    top: 57px;
    width: 302px;
    height: 53px;
    background: #ed7d31;
    color: #fff;
}
.s-send {
    left: 1933px;
    top: 55px;
    width: 162px;
    height: 64px;
    padding-bottom: 8px;
    background: #f00;
    color: #fff;
    font-weight: bold;
}
.tri {
    position: absolute;
    left: 1791px;
    top: 68px;
}
.s-pattern {
    left: 498px;
    top: 836px;
    width: 192px;
    height: 60px;
    padding-bottom: 6px;
    background: #92d050;
    text-align: left;
    padding-left: 16px;
}
.s-hex {
    left: 818px;
    top: 837px;
    width: 209px;
    height: 58px;
    background: #4472c4;
    color: #ff0;
    text-align: left;
    padding-left: 16px;
}
.s-hex span {
    color: #fff;
    font-size: 18px;
    font-weight: 500;
}
.s-make {
    left: 1096px;
    top: 839px;
    width: 193px;
    height: 60px;
    padding-bottom: 6px;
    background: #c00000;
    color: #fff;
}
.s-plus {
    left: 1353px;
    top: 838px;
    width: 124px;
    height: 60px;
    padding-bottom: 6px;
    background: #7030a0;
    color: #fff;
    font-weight: bold;
}
.cursor {
    position: absolute;
    left: 1304px;
    top: 974px;
    width: 40px;
    height: 39px;
    border: 2px solid #217346;
}
.cursor::after {
    content: "";
    position: absolute;
    right: -4px;
    bottom: -4px;
    width: 7px;
    height: 7px;
    background: #217346;
    border: solid #fff;
    border-width: 1px 0 0 1px;
}

/* scroll bars */
.vscroll {
    width: 27px;
    flex: none;
    margin: 0 0 -2px 3px;
    padding: 1px 3px 0 0;
    display: flex;
    flex-direction: column;
}
.arrow {
    width: 25px;
    height: 25px;
    flex: none;
    background: #fff;
    border: 1px solid #999;
    display: flex;
    align-items: center;
    justify-content: center;
}
.vtrack {
    flex: 1;
    background: #f1f1f1;
}
.vthumb {
    height: 97%;
    width: 25px;
    background: #fff;
    border: 1px solid #999;
}

/* sheet tabs */
.sheetbar {
    height: 32px;
    flex: none;
    display: flex;
    border-top: 1px solid #999;
    border-bottom: 1px solid #c6c6c6;
    font-family: "Noto Sans CJK JP", sans-serif;
    font-size: 21px;
    font-weight: 300;
    color: #444;
}
.navs {
    width: 109px;
    padding-left: 28px;
    display: flex;
    gap: 26px;
    align-items: center;
    fill: #bbb;
}
.sheetbar a {
    height: 22px;
    line-height: 18px;
    margin-top: 1px;
    padding: 0 20px 0 18px;
    border-right: 1px solid #999;
}
.sheetbar .current {
    height: 28px;
    margin-top: -1px;
    padding: 0 14px;
    line-height: 22px;
    background: #fff;
    color: #217346;
    font-weight: 400;
    border-left: 1px solid #999;
    border-bottom: 3px solid #217346;
}
.sheetbar .current + a {
    border-right-color: #999;
    padding: 0 18px 0 16px;
}
.plus {
    margin-left: 36px;
    height: 30px;
    display: flex;
    align-items: center;
}
.sheetbar .dots {
    margin: 8px 16px 0 auto;
}
.hscroll {
    width: 38%;
    display: flex;
    align-items: center;
    padding-top: 1px;
    margin-right: 30px;
}
.htrack {
    flex: 1;
    height: 25px;
    background: #f1f1f1;
}
.hthumb {
    width: 89%;
    height: 25px;
    background: #fff;
    border: 1px solid #999;
}

/* status bar */
.status {
    height: 32px;
    flex: none;
    display: flex;
    align-items: center;
    background: #f3f3f3;
    padding: 0 30px 0 16px;
}
.status > span, .status b {
    padding-bottom: 2px;
}
.status b {
    margin-left: 4px;
}
.rec {
    margin: 0 30px 0 31px;
}
.views {
    display: flex;
    margin: 0 10px 0 auto;
}
.views button {
    width: 60px;
    height: 32px;
    border: 0;
}
input[type="range"] {
    appearance: none;
    width: 148px;
    height: 18px;
    margin: 0 8px;
    background: linear-gradient(#333, #333) center / 100% 2px no-repeat;
}
input[type="range"]::-webkit-slider-thumb {
    appearance: none;
    width: 8px;
    height: 18px;
    background: #444;
}
.zoom {
    margin-left: 14px;
    width: 52px;
    font-size: 18px;
    text-align: right;
}
```

FILE: script.js
```js
const widths = [43, 55, 110, 91, 104, 91, 91, 116, 104, 57];
for (let i = 0; i < 16; i++) widths.push(37);
widths.push(47, 48, 67, 67, 104, 104, 104, 104, 104);

const names = [];
for (let i = 0; i < widths.length - 1; i++) {
    names.push(i < 26 ? String.fromCharCode(65 + i) : 'A' + String.fromCharCode(39 + i));
}

const LAST_ROW = 41;
const cells = {};
const owner = {};

// "AB12" -> [row, column]
function ref(a) {
    const m = a.match(/([A-Z]+)(\d+)/);
    return [Number(m[2]), names.indexOf(m[1])];
}

function at(r, c) {
    const k = owner[r + ',' + c] || r + ',' + c;
    if (!cells[k]) cells[k] = { text: '', cls: [], cols: 1, rows: 1 };
    return cells[k];
}

function put(a, text, cls = '', cols = 1, rows = 1) {
    const [r, c] = ref(a);
    const cell = at(r, c);
    cell.text = text;
    cell.cols = cols;
    cell.rows = rows;
    if (cls) cell.cls.push(...cls.split(' '));
    for (let i = 0; i < rows; i++)
        for (let j = 0; j < cols; j++)
            if (i || j) owner[(r + i) + ',' + (c + j)] = r + ',' + c;
}

// outline a range: each cell owns its right and bottom edge
function frame(from, to, w = 'k') {
    const [r1, c1] = ref(from), [r2, c2] = ref(to);
    for (let c = c1; c <= c2; c++) {
        if (r1 > 1) at(r1 - 1, c).cls.push(w + 'b');
        at(r2, c).cls.push(w + 'b');
    }
    for (let r = r1; r <= r2; r++) {
        at(r, c1 - 1).cls.push(w + 'r');
        at(r, c2).cls.push(w + 'r');
    }
}

// font data
const codes = ['00', '18', '24', '42', '46', '4A', '4A', '52', '52', '62', '42', '42', '24', '18', '00', '00'];
codes.forEach((hex, i) => {
    const r = i + 5, n = parseInt(hex, 16), bits = n.toString(2).padStart(8, '0');
    put('A' + r, i, 'c');
    put('B' + r, hex, 'c input dash' + (i < 15 ? ' dot' : '') + (hex === '4A' ? '' : ' flag'));
    put('C' + r, n, 'c');
    put('D' + r, '00' + hex, 'c');
    put('E' + r, 0, 'r');
    put('F' + r, n, 'r');
    put('G' + r, '00000000', 'c');
    put('H' + r, bits, 'c');
    [...bits].forEach((b, j) => {
        if (b === '1') put(names[17 + j] + r, '■', 'c');
    });
});

const low = '00 00 00 00 00 00 00 00 00 F8 04 82 62 14 F8 00'.split(' ');
const high = '00 00 00 00 00 00 00 00 00 0F 12 21 20 10 0F 00'.split(' ');
for (let i = 0; i < 16; i++) {
    put(names[9 + i] + 4, i, 'c');
    put(names[9 + i] + 21, low[i], 'c');
    put(names[9 + i] + 22, high[i], 'c');
}

put('B1', 'FileName:');
put('C1', 'shnm8x16a', 'c', 3);
put('B2', 'CorSize:');
put('C2', 8, 'c');
put('D2', 'RowSize', 'c');
put('E2', 16, 'c');
put('H2', '←　①BDFファイルを読み込む', '', 7);
['BDF', 'dec', 'hex', 'uHex', 'hHex', 'uBin', 'hBin'].forEach((t, i) => put(names[i + 1] + 4, t, 'c'));

put('AB1', 'CPort', 'small-text');
put('AC1', 'CMD', 'small-text');
put('AD1', 'Address', 'small-text');
put('AB2', 4, 'c input');
put('AC2', 'W', 'c input');
put('AD2', '00300', 'input flag');
put('AB3', 'Send Data', '', 2);
put('AD3', '↑⑤', 'c');
put('AE3', '次番地');
put('AB4', 'W00300,00,F8,04,82,62,14,F8,00,00,0F,12,21,20,10,0F,<br>00,', 'wrap', 6, 3);
for (let r = 8; r <= 40; r++) {
    if (r !== 37) put('AB' + r, r === 8 ? 'R0' : r === 9 ? '00000 &gt; 00' : '', '', 6);
}

put('B22', 'Code', 'c');
put('D22', '文字入力', 'c');
put('A23', 'Hex:', 'c');
put('A24', 'Dec:', 'c');
put('B23', '0030', 'c');
put('B24', '48', 'c');
put('D23', '0', 'c yellow flag', 1, 2);
['D25', 'F25', 'K25', 'Q25', 'X25'].forEach(a => put(a, '↑', 'c'));

put('A26', '', 'nr');
put('B26', '<span>全半角を確認</span>', 'c spill nr');
put('D26', '<span>②ここに<br>文字を入</span>', 'c wrap two', 1, 2);
put('F26', '<span>③ボタンを押すとパ<br>ターンが表示される</span>', 'wrap two', 2, 2);
put('I26', '④HEXデータを書込む', 'blue', 6);
put('I27', 'カレントフォルダーに', '', 6);
put('I28', '"FileName".csvとして', '', 6);
put('I29', '追加モードで書き込', '', 5);
put('I30', 'まれる', '', 2);
put('P26', '⑥HEXデータを', '', 5);
put('P27', '送信用データと', '', 5);
put('P28', 'として作成し', '', 4);
put('P29', 'SendDataセル', '', 4);
put('P30', 'に格納', '', 2);
put('V26', '⑦PICに送信', 'red', 4);
put('V27', '送信後アドレス加算', '', 6);
put('V28', '（アドレス加算を', '', 5);
put('V29', '　希望しないなら、', '', 6);
put('V30', '　右上の送信ボタン）', '', 6);

put('B29', '◆他の文字を見るには②～④（～⑦）を繰り返す', '', 6);
put('B31', '●シリアル通信するには、右上のCPortに接続ポート番号を入力', '', 7);
put('B32', "●CMDセルに'W'または'S'を入力し、書込たいアドレスをAddressセルに入力", '', 8);
put('B33', '●CMDセルを空白にすると、コマンドとアドレスは送信されない(シーケンスモード対応）', '', 12);
put('C34', '（シーケンスモードにするには”Waaaa,"と送信。Addressセル値は無視）', '', 9);
put('C35', "（シーケンスモード終了は’Q'コマンドなど送信）", '', 5);
put('B37', '＜注意＞', 'c');
put('C37', '★色のついた所以外は書き換え・ボタン操作をしないこと！', '', 7);
put('C38', '★セル参照を行っているので行・列の挿入・削除はしないこと！', '', 7);
put('C39', '★全角文字は全角ファイル、半角文字は半角ファイルを指定すること！', '', 9);
put('C40', '★もし、文字コード検索が無限ループになったら、ESCキーを押して下さい', '', 10);
put('O32', '■次番地ボタンを押すと、Corsizeによって', '', 12);
put('O33', 'addressが16または32加算されます', '', 10);
put('O37', '■フォントパターンを変更する場合', '', 10);
put('O38', 'BDFセル（B5:B20)を変更して下さい', '', 11);
put('O39', 'フォントパターンそのものは変更しないこと！', '', 13);

frame('B1', 'B1');
frame('C1', 'E1');
frame('B2', 'B2');
frame('C2', 'C2');
frame('D2', 'D2');
frame('E2', 'E2');
frame('B5', 'H20');
frame('J5', 'Y20', 'm');
frame('B23', 'B23');
frame('B24', 'B24');
frame('D23', 'D24', 'm');
frame('AB2', 'AB2');
frame('AC2', 'AC2');
frame('AD2', 'AD2');
frame('AB4', 'AG6');
frame('AB8', 'AG40');

// build the table
let html = '<colgroup>' + widths.map(w => `<col style="width:${w}px">`).join('') + '</colgroup>';
html += '<thead><tr><th class="corner"></th>';
html += names.map(n => `<th${n === 'V' ? ' class="sel"' : ''}>${n}</th>`).join('') + '</tr></thead><tbody>';
for (let r = 1; r <= LAST_ROW; r++) {
    html += `<tr${[4, 20, 22, 24].includes(r) ? ' class="tall"' : ''}><th${r === 27 ? ' class="sel"' : ''}>${r}</th>`;
    for (let c = 0; c < names.length; c++) {
        if (owner[r + ',' + c]) continue;
        const cell = at(r, c);
        html += `<td class="${cell.cls.join(' ')}" colspan="${cell.cols}" rowspan="${cell.rows}">${cell.text}</td>`;
    }
    html += '</tr>';
}
document.getElementById('grid').innerHTML = html + '</tbody>';
```
